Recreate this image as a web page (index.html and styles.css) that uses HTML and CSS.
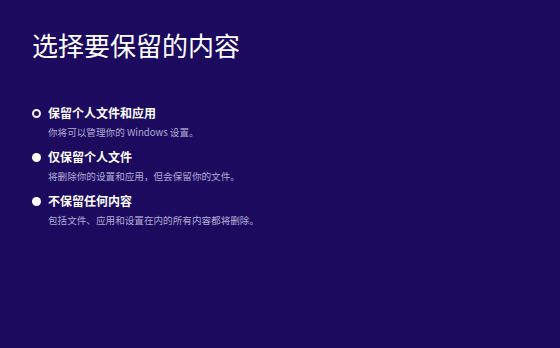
FILE: index.html
```html
<!DOCTYPE html>
<html lang="zh-CN">
<head>
<meta charset="utf-8">
<link rel="stylesheet" href="styles.css">
</head>
<body>
<div class="page">
  <h1 class="title">选择要保留的内容</h1>
  <ul class="options">
    <li class="option">
      <div class="label"><span class="radio checked"></span>保留个人文件和应用</div>
      <div class="desc">你将可以管理你的 Windows 设置。</div>
    </li>
    <li class="option">
      <div class="label"><span class="radio"></span>仅保留个人文件</div>
      <div class="desc">将删除你的设置和应用，但会保留你的文件。</div>
    </li>
    <li class="option">
      <div class="label"><span class="radio"></span>不保留任何内容</div>
      <div class="desc">包括文件、应用和设置在内的所有内容都将删除。</div>
    </li>
  </ul>
</div>
</body>
</html>
```

FILE: styles.css
```css
html, body {
  margin: 0;
  padding: 0;
  width: 560px;
  height: 348px;
  background: #1b0a5e;
  overflow: hidden;
}
.page {
  padding: 30px 0 0 32px;
  font-family: "Noto Sans CJK SC", "Noto Sans", sans-serif;
  color: #ffffff;
}
.title {
  margin: 0;
  font-size: 26px;
  font-weight: 400;
  line-height: 30px;
  letter-spacing: 0;
}
.options {
  list-style: none;
  margin: 45px 0 0 0;
  padding: 0;
  display: flex;
  flex-direction: column;
  gap: 10px;
}
.option {
  display: flex;
  flex-direction: column;
  gap: 4px;
}
.label {
  display: flex;
  align-items: center;
  font-size: 12px;
  font-weight: 700;
  line-height: 16px;
  color: #ffffff;
}
.radio {
  width: 9px;
  height: 9px;
  border-radius: 50%;
  background: #ffffff;
  margin-right: 7px;
  box-sizing: border-box;
  flex: none;
}
.radio.checked {
  background: #1b0a5e;
  border: 2.5px solid #f2f0fa;
}
.desc {
  padding-left: 16px;
  font-size: 9.6px;
  line-height: 14px;
  color: #b3aad6;
}
```
